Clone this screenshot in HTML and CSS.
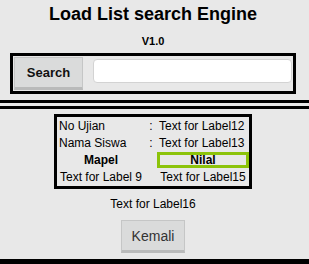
FILE: index.html
```html
<!DOCTYPE html>
<html>
<head>
  <title>Load List search Engine</title>
  <link rel="stylesheet" href="styles.css">
</head>
<body>

  <div class="top">
    <h1 class="title">Load List search Engine</h1>
    <p class="version">V1.0</p>
    <div class="search-box">
      <button class="btn btn-search">Search</button>
      <input class="search-input" type="text">
    </div>
  </div>

  <div class="double-rule"></div>

  <div class="result">
    <div class="info-table">
      <span class="cell label">No Ujian</span>
      <span class="cell colon">:</span>
      <span class="cell value">Text for Label12</span>

      <span class="cell label">Nama Siswa</span>
      <span class="cell colon">:</span>
      <span class="cell value">Text for Label13</span>

      <span class="cell head">Mapel</span>
      <span class="cell head nilai">Nilal</span>

      <span class="cell center">Text for Label 9</span>
      <span class="cell center right-col">Text for Label15</span>
    </div>

    <p class="footer-label">Text for Label16</p>
    <button class="btn btn-kemali">Kemali</button>
  </div>

  <div class="bottom-rule"></div>

</body>
</html>
```

FILE: styles.css
```css
body {
  margin: 0;
  background: #e8e8e8;
  color: #000;
  font-family: 'Liberation Sans', Arial, sans-serif;
}

.top,
.result {
  width: 306px;
  display: flex;
  flex-direction: column;
  align-items: center;
}

.title {
  margin: 0;
  padding-top: 4px;
  font-size: 18px;
  line-height: 20px;
  font-weight: bold;
}

.version {
  margin: 11px 0 0;
  font-size: 11px;
  line-height: 13px;
  font-weight: bold;
}

.search-box {
  box-sizing: border-box;
  width: 286px;
  margin-top: 5px;
  padding: 1px;
  border: 3px solid #000;
  display: flex;
  align-items: flex-start;
  gap: 10px;
}

.btn {
  box-sizing: border-box;
  padding: 0;
  background: #dadbdb;
  border: 1px solid #c5c6c6;
  border-bottom: 3px solid #b9baba;
  border-radius: 0;
  font-family: 'Liberation Sans', Arial, sans-serif;
  cursor: pointer;
}

.btn-search {
  width: 69px;
  height: 33px;
  font-size: 13px;
  font-weight: bold;
  color: #111;
}

.search-input {
  box-sizing: border-box;
  flex: 1;
  height: 24px;
  margin-top: 2px;
  background: #fff;
  border: 1px solid #d3d3d3;
  border-radius: 4px;
}

.double-rule {
  height: 3px;
  margin-top: 6px;
  border-top: 3px solid #000;
  border-bottom: 3px solid #000;
}

.info-table {
  box-sizing: border-box;
  width: 198px;
  height: 75px;
  margin-top: 5px;
  border: 3px solid #000;
  display: grid;
  grid-template-columns: 88px 12px 92px;
  grid-template-rows: repeat(4, 1fr);
  font-size: 12px;
  white-space: nowrap;
}

.cell {
  display: flex;
  align-items: center;
}

.label {
  padding-left: 2px;
}

.colon {
  justify-content: center;
}

.value {
  padding-left: 2px;
}

.head {
  justify-content: center;
  font-weight: bold;
}

.nilai {
  grid-column: 3;
  box-sizing: border-box;
  height: 16px;
  align-self: center;
  border: 3px solid #8cc30a;
}

.center {
  justify-content: center;
}

.right-col {
  grid-column: 3;
}

.footer-label {
  margin: 8px 0 0;
  font-size: 12px;
  line-height: 14px;
}

.btn-kemali {
  width: 64px;
  height: 33px;
  margin-top: 9px;
  font-size: 14px;
  color: #333;
}

.bottom-rule {
  height: 6px;
  margin-top: 6px;
  background: #000;
}
```
